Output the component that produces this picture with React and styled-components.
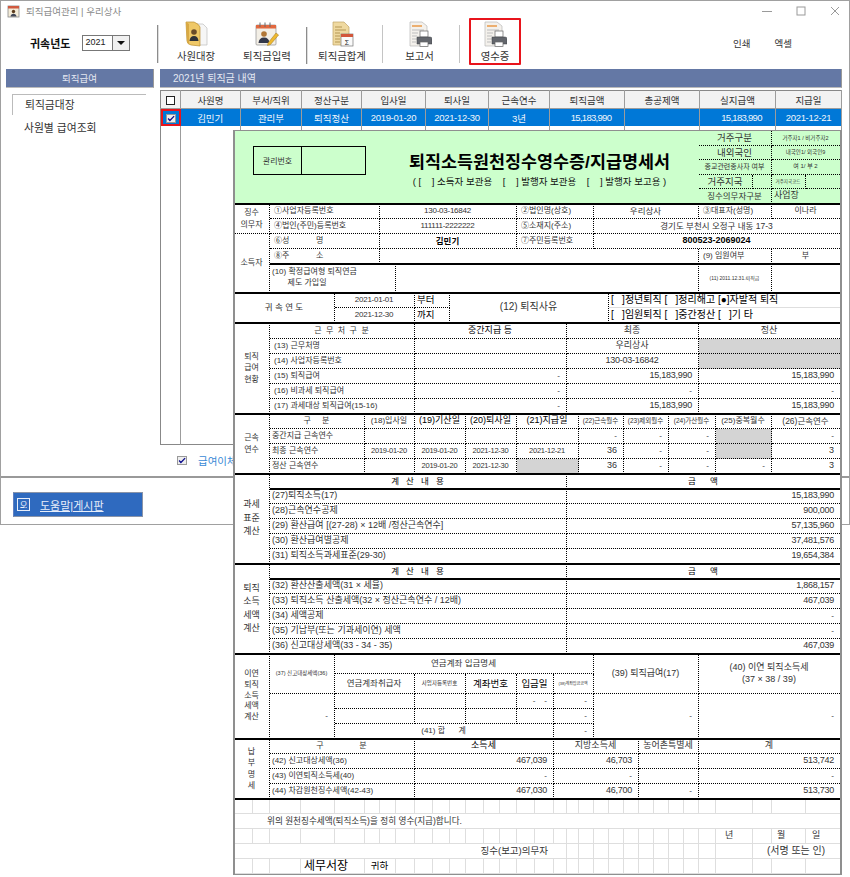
import React from 'react'
import styled, { createGlobalStyle } from 'styled-components'

const FONT = '"Liberation Sans", "Noto Sans CJK KR", sans-serif'

const GlobalStyle = createGlobalStyle`
  html, body {
    margin: 0;
    background: #fff;
    font-family: ${FONT};
    color: #333;
  }
`

const Page = styled.div`
  position: relative;
  width: 850px;
  height: 877px;
  overflow: hidden;
`

const Window = styled.div`
  width: 850px;
  height: 525px;
  box-sizing: border-box;
  border: 1px solid #a0a0a0;
  display: flex;
  flex-direction: column;
`

const TitleBar = styled.div`
  height: 20px;
  display: flex;
  align-items: center;
  padding: 0 4px 0 6px;
  gap: 6px;
  font-size: 9.5px;
  color: #8a8a8a;
`

const TitleText = styled.span`
  flex: 1;
`

const WinButton = styled.span`
  width: 20px;
  margin-left: 8px;
  display: flex;
  justify-content: center;
  align-items: center;
`

const Toolbar = styled.div`
  height: 45px;
  display: flex;
  align-items: stretch;
`

const YearBox = styled.div`
  width: 156px;
  display: flex;
  align-items: center;
  gap: 12px;
  padding-left: 29px;
  box-sizing: border-box;
  margin-top: -2px;
`

const YearLabel = styled.b`
  font-size: 11px;
  color: #111;
`

const YearSelect = styled.div`
  width: 48px;
  height: 16px;
  box-sizing: border-box;
  border: 1px solid #777;
  display: flex;
  font-size: 9px;
  line-height: 13px;
  color: #222;
  padding-left: 2px;
  justify-content: space-between;
`

const SelectArrow = styled.span`
  width: 16px;
  border-left: 1px solid #777;
  background: #f0f0f0;
  display: flex;
  align-items: center;
  justify-content: center;
  &::after {
    content: '';
    border: 4px solid transparent;
    border-top: 4px solid #111;
    border-bottom: 0;
  }
`

const Divider = styled.span`
  width: 1px;
  flex: none;
  margin: ${p => p.$margin || '5px 0 5px'};
  background: ${p => (p.$dark ? '#8c8c8c' : '#c4c4c4')};
  border-right: ${p => (p.$dark ? '1px solid #ddd' : 'none')};
`

const ToolButton = styled.div`
  width: ${p => p.$width}px;
  flex: none;
  display: flex;
  flex-direction: column;
  align-items: center;
  justify-content: flex-end;
  gap: 1px;
  font-size: 10.4px;
  color: #333;
  padding: 0 ${p => p.$trail || 0}px 3px 0;
  box-sizing: border-box;
  ${p => p.$active && `
    border: 2px solid #e8141c;
    margin: -3px 0 1px;
    padding-bottom: 0;
    border-radius: 1px;
  `}
`

const ToolIcon = styled.svg`
  width: 24px;
  height: 26px;
  display: block;
`

const TextAction = styled.span`
  font-size: 9.5px;
  color: #333;
  align-self: center;
  margin-top: -2px;
  margin-left: ${p => p.$left}px;
`

const Body = styled.div`
  height: 412px;
  display: flex;
  padding: 3px 7px 0 5px;
  gap: 6px;
  box-sizing: border-box;
  border-bottom: 2px solid #999;
`

const Sidebar = styled.div`
  width: 148px;
  flex: none;
`

const Main = styled.div`
  flex: 1;
  display: flex;
  flex-direction: column;
`

const SectionBar = styled.div`
  height: 19px;
  background: #6478a5;
  color: #e4e8f2;
  font-size: ${p => (p.$center ? 9.5 : 10)}px;
  line-height: 19px;
  text-align: ${p => (p.$center ? 'center' : 'left')};
  padding-left: ${p => (p.$center ? 0 : 13)}px;
  border-right: 1px solid #999;
  border-bottom: 1px solid #bbb;
  box-sizing: border-box;
`

const SideItem = styled.div`
  margin: ${p => (p.$active ? '6px 0 0 6px' : '2px 0 0 6px')};
  width: 134px;
  height: ${p => (p.$active ? 21 : 24)}px;
  line-height: ${p => (p.$active ? 21 : 23)}px;
  padding-left: 12px;
  box-sizing: border-box;
  font-size: 10.8px;
  color: #333;
  border-top: ${p => (p.$active ? '1px solid #bbb' : 'none')};
  border-left: ${p => (p.$active ? '1px solid #bbb' : 'none')};
`

const ListTable = styled.table`
  margin-top: 2px;
  width: 681px;
  height: 355px;
  table-layout: fixed;
  border-collapse: collapse;
  border: 1px solid #888;
  font-size: 9.5px;
`

const HeadCell = styled.th`
  height: 17px;
  padding: 0;
  background: #f2f2f2;
  font-weight: normal;
  color: #333;
  border-right: 1px solid #9c9c9c;
  border-bottom: 1px solid #9c9c9c;
`

const RowCell = styled.td`
  height: 17px;
  padding: 0 0 0 ${p => p.$shift || 0}px;
  background: #0078d7;
  color: #f2f6fb;
  text-align: center;
  letter-spacing: ${p => p.$spacing || 0}px;
  border-right: 1px solid #9c9c9c;
`

const CheckMark = styled.td`
  padding: 0;
  text-align: center;
  background: #0078d7;
  outline: 2px solid #e8141c;
  outline-offset: -2px;
`

const FillCell = styled.td`
  padding: 0;
  border-right: 1px solid #9c9c9c;
`

const Square = styled.span`
  display: inline-block;
  width: 9px;
  height: 9px;
  box-sizing: border-box;
  border: 1px solid #222;
  background: #fff;
  vertical-align: middle;
`

const CheckBox = styled.span`
  display: inline-flex;
  width: 10px;
  height: 9px;
  background: #eee;
  border: 1px solid #999;
  box-sizing: border-box;
  vertical-align: middle;
  align-items: center;
  justify-content: center;
  overflow: visible;
`

const TransferRow = styled.div`
  display: flex;
  align-items: center;
  gap: 11px;
  padding: 8px 0 0 17px;
  font-size: 10.5px;
  color: #3a8ad6;
`

const Footer = styled.div`
  flex: 1;
  padding: 14px 0 0 12px;
`

const HelpButton = styled.div`
  width: 130px;
  height: 25px;
  box-sizing: border-box;
  background: #2f6abf;
  border: 1px solid #8a94a8;
  border-left-color: #5f7fc0;
  display: flex;
  align-items: center;
  gap: 10px;
  padding-left: 3px;
  color: #e8eefa;
  font-size: 11px;
  text-decoration: underline;
`

const HelpIcon = styled.span`
  width: 11px;
  height: 11px;
  border: 1px solid #e8eefa;
  font-size: 8px;
  line-height: 10px;
  text-align: center;
  text-decoration: none;
  flex: none;
`

/* 원천징수영수증 서식: 엑셀 셀 경계를 그대로 열/행 격자로 쓴다 */
const COLS = [235, 253, 270, 301, 335, 365, 380, 396, 415, 433, 450, 466, 484, 500, 517, 535, 554, 567, 579, 594, 609, 624, 639, 654, 669, 684, 699, 716, 753, 772, 806, 840]
const ROWS = [131, 146, 160, 175, 189, 204, 219, 234, 249, 264, 293, 308, 323, 339, 354, 369, 384, 399, 414, 429, 444, 459, 474, 489, 504, 519, 534, 549, 564, 579, 594, 609, 624, 639, 654, 674, 694, 709, 724, 739, 754, 769, 784, 799, 814, 829, 844, 859, 874]

const track = list => list.slice(1).map((v, i) => `${v - list[i]}px`).join(' ')
const colIndex = x => COLS.indexOf(x) + 1
const rowIndex = y => ROWS.indexOf(y) + 1

const FormSheet = styled.div`
  position: absolute;
  left: 233px;
  top: 130px;
  border: 2px solid #8f8f8f;
  border-top: 1px solid #8f8f8f;
  border-bottom: 1px solid #8f8f8f;
  background: #fff;
  display: grid;
  grid-template-columns: ${track(COLS)};
  grid-template-rows: ${track(ROWS)};
  color: #333;
  font-size: 8px;
`

const GreenBand = styled.div`
  grid-area: 1 / 1 / 6 / -1;
  background: #ccffcc;
`

const Rule = styled.div`
  grid-row: ${p => p.$row};
  grid-column: ${p => p.$col} / -1;
  height: 2px;
  margin-top: -1px;
  background: #000;
  z-index: 2;
`

const Cell = styled.div`
  grid-column: ${p => p.$col};
  grid-row: ${p => p.$row};
  box-sizing: border-box;
  display: flex;
  align-items: center;
  justify-content: ${p => ({ l: 'flex-start', c: 'center', r: 'flex-end' }[p.$align || 'l'])};
  padding: 0 ${p => (p.$align === 'r' ? 6 : 1)}px 0 ${p => (p.$pad ?? (p.$align ? 0 : 4))}px;
  border-right: ${p => (p.$noR ? 'none' : p.$pale ? '1px solid #dedede' : '1px dotted #000')};
  border-bottom: ${p => (p.$pale ? '1px solid #dedede' : '1px dotted #000')};
  background: ${p => (p.$grey ? '#d4d4d4' : 'transparent')};
  font-size: ${p => p.$size || 8}px;
  font-weight: ${p => (p.$bold ? 700 : 400)};
  color: ${p => (p.$bold || p.$dark ? '#000' : '#333')};
  letter-spacing: ${p => (p.$num ? '-0.25px' : '0')};
  text-align: ${p => (p.$align === 'l' || !p.$align ? 'left' : 'center')};
  white-space: pre;
  line-height: ${p => p.$lead || 1.25};
  overflow: hidden;
  z-index: 1;
`

const ManageBox = styled.div`
  grid-column: ${p => p.$col};
  grid-row: 2 / 4;
  border: 1px solid #000;
  margin-right: -1px;
  display: flex;
  align-items: center;
  justify-content: center;
  font-size: 8px;
  color: #333;
  z-index: 1;
`

const DocTitle = styled.div`
  grid-column: ${colIndex(380)} / ${colIndex(699)};
  grid-row: 2 / 4;
  font-size: 17.4px;
  font-weight: 700;
  color: #000;
  display: flex;
  align-items: center;
  justify-content: center;
  white-space: nowrap;
  z-index: 1;
`

const DocSub = styled.div`
  grid-column: ${colIndex(380)} / ${colIndex(699)};
  grid-row: 4 / 5;
  font-size: 9.5px;
  color: #111;
  display: flex;
  align-items: center;
  justify-content: center;
  white-space: pre;
  margin-top: -3px;
  z-index: 1;
`

// [x1, x2, y1, y2, text, options] 좌표는 COLS/ROWS 경계값
const CELLS = [
  // 거주 구분 (녹색 영역 오른쪽)
  [699, 772, 131, 146, '거주구분', { align: 'c', size: 9.5 }],
  [772, 840, 131, 146, '거주자1 / 비거주자2', { align: 'c', size: 5.5, noR: true }],
  [699, 772, 146, 160, '내외국인', { align: 'c', size: 9.5 }],
  [772, 840, 146, 160, '내국인1/ 외국인9', { align: 'c', size: 5.5, noR: true }],
  [699, 772, 160, 175, '종교관련종사자 여부', { align: 'c', size: 7 }],
  [772, 840, 160, 175, '여 1/ 부 2', { align: 'c', size: 6, noR: true }],
  [699, 753, 175, 189, '거주지국', { align: 'c', size: 9.5 }],
  [753, 772, 175, 189, '', {}],
  [772, 806, 175, 189, '거주지국코드', { align: 'c', size: 4.5 }],
  [806, 840, 175, 189, '', { noR: true }],
  [699, 772, 189, 204, '징수의무자구분', { align: 'c', size: 8.5 }],
  [772, 840, 189, 204, '사업장', { size: 9, pad: 2, noR: true }],

  // 징수의무자
  [235, 270, 204, 234, '징수\n의무자', { align: 'c', lead: 1.45 }],
  [270, 380, 204, 219, '①사업자등록번호'],
  [380, 517, 204, 219, '130-03-16842', { align: 'c', num: true }],
  [517, 594, 204, 219, '②법인명(상호)'],
  [594, 699, 204, 219, '우리상사', { align: 'c', size: 8.5 }],
  [699, 772, 204, 219, '③대표자(성명)'],
  [772, 840, 204, 219, '이나라', { align: 'c', noR: true }],
  [270, 380, 219, 234, '④법인(주민)등록번호'],
  [380, 517, 219, 234, '111111-2222222', { align: 'c', num: true }],
  [517, 594, 219, 234, '⑤소재지(주소)'],
  [594, 840, 219, 234, '경기도 부천시 오정구 내동 17-3', { align: 'c', size: 8.5, noR: true }],

  // 소득자
  [235, 270, 234, 293, '소득자', { align: 'c' }],
  [270, 380, 234, 249, '⑥성            명'],
  [380, 517, 234, 249, '김민기', { align: 'c', bold: true, size: 8.5 }],
  [517, 594, 234, 249, '⑦주민등록번호'],
  [594, 840, 234, 249, '800523-2069024', { align: 'c', bold: true, size: 9, noR: true }],
  [270, 380, 249, 264, '⑧주            소'],
  [380, 699, 249, 264, ''],
  [699, 772, 249, 264, '(9) 임원여부'],
  [772, 840, 249, 264, '부', { align: 'c', noR: true }],
  [270, 396, 264, 293, '(10) 확정급여형 퇴직연금\n       제도 가입일', { pad: 2, lead: 1.35 }],
  [396, 699, 264, 293, ''],
  [699, 772, 264, 293, '(11) 2011.12.31.퇴직금', { align: 'c', size: 5 }],
  [772, 840, 264, 293, '', { noR: true }],

  // 귀속연도
  [235, 335, 293, 323, '귀 속 연 도', { align: 'c', size: 8.5 }],
  [335, 415, 293, 308, '2021-01-01', { align: 'c', num: true }],
  [415, 450, 293, 308, '부터', { size: 9.5, pad: 2, dark: true }],
  [335, 415, 308, 323, '2021-12-30', { align: 'c', num: true }],
  [415, 450, 308, 323, '까지', { size: 9.5, pad: 2, dark: true }],
  [450, 609, 293, 323, '(12) 퇴직사유', { align: 'c', size: 10 }],
  [609, 840, 293, 308, '[   ]정년퇴직 [   ]정리해고 [●]자발적 퇴직', { size: 10, pad: 2, noR: true, pale: true, dark: true }],
  [609, 840, 308, 323, '[   ]임원퇴직 [   ]중간정산 [   ]기 타', { size: 10, pad: 2, noR: true, dark: true }],

  // 퇴직급여현황
  [235, 270, 323, 414, '퇴직\n급여\n현황', { align: 'c', lead: 1.45 }],
  [270, 415, 323, 339, '근  무  처  구  분', { align: 'c' }],
  [415, 567, 323, 339, '중간지급 등', { align: 'c', dark: true, size: 9 }],
  [567, 699, 323, 339, '최종', { align: 'c', size: 9 }],
  [699, 840, 323, 339, '정산', { align: 'c', size: 9, noR: true }],
  [270, 415, 339, 354, '(13) 근무처명'],
  [415, 567, 339, 354, ''],
  [567, 699, 339, 354, '우리상사', { align: 'c', size: 9 }],
  [699, 840, 339, 354, '', { grey: true, noR: true }],
  [270, 415, 354, 369, '(14) 사업자등록번호'],
  [415, 567, 354, 369, ''],
  [567, 699, 354, 369, '130-03-16842', { align: 'c', size: 9, num: true }],
  [699, 840, 354, 369, '', { grey: true, noR: true }],
  [270, 415, 369, 384, '(15) 퇴직급여'],
  [415, 567, 369, 384, '-', { align: 'r' }],
  [567, 699, 369, 384, '15,183,990', { align: 'r', size: 9, num: true }],
  [699, 840, 369, 384, '15,183,990', { align: 'r', size: 9, num: true, noR: true }],
  [270, 415, 384, 399, '(16) 비과세 퇴직급여'],
  [415, 567, 384, 399, '-', { align: 'r' }],
  [567, 699, 384, 399, '-', { align: 'r' }],
  [699, 840, 384, 399, '-', { align: 'r', noR: true }],
  [270, 415, 399, 414, '(17) 과세대상 퇴직급여(15-16)'],
  [415, 567, 399, 414, '-', { align: 'r' }],
  [567, 699, 399, 414, '15,183,990', { align: 'r', size: 9, num: true }],
  [699, 840, 399, 414, '15,183,990', { align: 'r', size: 9, num: true, noR: true }],

  // 근속연수
  [235, 270, 414, 474, '근속\n연수', { align: 'c', lead: 1.45 }],
  [270, 365, 414, 429, '구     분', { align: 'c' }],
  [365, 415, 414, 429, '(18)입사일', { align: 'c' }],
  [415, 466, 414, 429, '(19)기산일', { align: 'c', size: 9, dark: true }],
  [466, 517, 414, 429, '(20)퇴사일', { align: 'c', size: 9, dark: true }],
  [517, 579, 414, 429, '(21)지급일', { align: 'c', size: 9, dark: true }],
  [579, 624, 414, 429, '(22)근속월수', { align: 'c', size: 6.5 }],
  [624, 669, 414, 429, '(23)제외월수', { align: 'c', size: 6.5 }],
  [669, 716, 414, 429, '(24)가산월수', { align: 'c', size: 6.5 }],
  [716, 772, 414, 429, '(25)중복월수', { align: 'c', size: 8 }],
  [772, 840, 414, 429, '(26)근속연수', { align: 'c', size: 8.5, noR: true }],
  [270, 365, 429, 444, '중간지급 근속연수', { pad: 2 }],
  [365, 415, 429, 444, ''],
  [415, 466, 429, 444, ''],
  [466, 517, 429, 444, ''],
  [517, 579, 429, 444, ''],
  [579, 624, 429, 444, '-', { align: 'r' }],
  [624, 669, 429, 444, '-', { align: 'r' }],
  [669, 716, 429, 444, '-', { align: 'r' }],
  [716, 772, 429, 444, '', { grey: true }],
  [772, 840, 429, 444, '-', { align: 'r', noR: true }],
  [270, 365, 444, 459, '최종 근속연수', { pad: 2 }],
  [365, 415, 444, 459, '2019-01-20', { align: 'c', num: true, size: 7.5 }],
  [415, 466, 444, 459, '2019-01-20', { align: 'c', num: true, size: 7.5 }],
  [466, 517, 444, 459, '2021-12-30', { align: 'c', num: true, size: 7.5 }],
  [517, 579, 444, 459, '2021-12-21', { align: 'c', num: true, size: 7.5 }],
  [579, 624, 444, 459, '36', { align: 'r', size: 9 }],
  [624, 669, 444, 459, '-', { align: 'r' }],
  [669, 716, 444, 459, '-', { align: 'r' }],
  [716, 772, 444, 459, '', { grey: true }],
  [772, 840, 444, 459, '3', { align: 'r', size: 9, noR: true }],
  [270, 365, 459, 474, '정산 근속연수', { pad: 2 }],
  [365, 415, 459, 474, ''],
  [415, 466, 459, 474, '2019-01-20', { align: 'c', num: true, size: 7.5 }],
  [466, 517, 459, 474, '2021-12-30', { align: 'c', num: true, size: 7.5 }],
  [517, 579, 459, 474, '', { grey: true }],
  [579, 624, 459, 474, '36', { align: 'r', size: 9 }],
  [624, 669, 459, 474, '-', { align: 'r' }],
  [669, 716, 459, 474, '-', { align: 'r' }],
  [716, 772, 459, 474, '-', { align: 'r' }],
  [772, 840, 459, 474, '3', { align: 'r', size: 9, noR: true }],

  // 과세표준계산
  [235, 270, 474, 564, '과세\n표준\n계산', { align: 'c', size: 9, lead: 1.5 }],
  [270, 567, 474, 489, '계   산   내   용', { align: 'c', dark: true, size: 8.5 }],
  [567, 840, 474, 489, '금      액', { align: 'c', dark: true, size: 8.5, noR: true }],
  [270, 567, 489, 504, '(27)퇴직소득(17)', { size: 9, pad: 2 }],
  [567, 840, 489, 504, '15,183,990', { align: 'r', size: 9, num: true, noR: true }],
  [270, 567, 504, 519, '(28)근속연수공제', { size: 9, pad: 2 }],
  [567, 840, 504, 519, '900,000', { align: 'r', size: 9, num: true, noR: true }],
  [270, 567, 519, 534, '(29) 환산급여 [(27-28) × 12배 /정산근속연수]', { size: 9, pad: 2 }],
  [567, 840, 519, 534, '57,135,960', { align: 'r', size: 9, num: true, noR: true }],
  [270, 567, 534, 549, '(30) 환산급여별공제', { size: 9, pad: 2 }],
  [567, 840, 534, 549, '37,481,576', { align: 'r', size: 9, num: true, noR: true }],
  [270, 567, 549, 564, '(31) 퇴직소득과세표준(29-30)', { size: 9, pad: 2 }],
  [567, 840, 549, 564, '19,654,384', { align: 'r', size: 9, num: true, noR: true }],

  // 퇴직소득세액계산
  [235, 270, 564, 654, '퇴직\n소득\n세액\n계산', { align: 'c', size: 9, lead: 1.45 }],
  [270, 567, 564, 579, '계   산   내   용', { align: 'c', dark: true, size: 8.5 }],
  [567, 840, 564, 579, '금      액', { align: 'c', dark: true, size: 8.5, noR: true }],
  [270, 567, 579, 594, '(32) 환산산출세액(31 × 세율)', { size: 9, pad: 2 }],
  [567, 840, 579, 594, '1,868,157', { align: 'r', size: 9, num: true, noR: true }],
  [270, 567, 594, 609, '(33) 퇴직소득 산출세액(32 × 정산근속연수 / 12배)', { size: 9, pad: 2 }],
  [567, 840, 594, 609, '467,039', { align: 'r', size: 9, num: true, noR: true }],
  [270, 567, 609, 624, '(34) 세액공제', { size: 9, pad: 2 }],
  [567, 840, 609, 624, '-', { align: 'r', noR: true }],
  [270, 567, 624, 639, '(35) 기납부(또는 기과세이연) 세액', { size: 9, pad: 2 }],
  [567, 840, 624, 639, '-', { align: 'r', noR: true }],
  [270, 567, 639, 654, '(36) 신고대상세액(33 - 34 - 35)', { size: 9, pad: 2 }],
  [567, 840, 639, 654, '467,039', { align: 'r', size: 9, num: true, noR: true }],

  // 이연퇴직소득세액계산
  [235, 270, 654, 739, '이연\n퇴직\n소득\n세액\n계산', { align: 'c', lead: 1.35 }],
  [270, 335, 654, 694, '(37) 신고대상세액(36)', { align: 'c', size: 5.5 }],
  [335, 594, 654, 674, '연금계좌 입금명세', { align: 'c', size: 8.5 }],
  [594, 699, 654, 694, '(39) 퇴직급여(17)', { align: 'c', size: 9 }],
  [699, 840, 654, 694, '(40) 이연 퇴직소득세\n(37 × 38 / 39)', { align: 'c', size: 9, noR: true, lead: 1.3 }],
  [335, 415, 674, 694, '연금계좌취급자', { align: 'c', size: 8.5 }],
  [415, 466, 674, 694, '사업자등록번호', { align: 'c', size: 5.5 }],
  [466, 517, 674, 694, '계좌번호', { align: 'c', size: 9.5, dark: true }],
  [517, 554, 674, 694, '입금일', { align: 'c', size: 9.5, dark: true }],
  [554, 594, 674, 694, '(38)계좌입금금액', { align: 'c', size: 4 }],
  [270, 335, 694, 739, '-', { align: 'r' }],
  [335, 415, 694, 709, ''],
  [415, 466, 694, 709, ''],
  [466, 517, 694, 709, ''],
  [517, 554, 694, 709, '-    -', { align: 'r', pad: 0 }],
  [554, 594, 694, 709, '-', { align: 'r' }],
  [335, 415, 709, 724, ''],
  [415, 466, 709, 724, ''],
  [466, 517, 709, 724, ''],
  [517, 554, 709, 724, ''],
  [554, 594, 709, 724, '-', { align: 'r' }],
  [335, 554, 724, 739, '(41) 합      계', { align: 'c' }],
  [554, 594, 724, 739, '-', { align: 'r' }],
  [594, 699, 694, 739, '-', { align: 'r' }],
  [699, 840, 694, 739, '-', { align: 'r', noR: true }],

  // 납부명세
  [235, 270, 739, 799, '납\n부\n명\n세', { align: 'c', lead: 1.4 }],
  [270, 415, 739, 754, '구                분', { align: 'c' }],
  [415, 554, 739, 754, '소득세', { align: 'c', size: 9, dark: true }],
  [554, 639, 739, 754, '지방소득세', { align: 'c', size: 9 }],
  [639, 699, 739, 754, '농어촌특별세', { align: 'c', size: 9 }],
  [699, 840, 739, 754, '계', { align: 'c', size: 9, noR: true }],
  [270, 415, 754, 769, '(42) 신고대상세액(36)', { pad: 2 }],
  [415, 554, 754, 769, '467,039', { align: 'r', size: 9, num: true }],
  [554, 639, 754, 769, '46,703', { align: 'r', size: 9, num: true }],
  [639, 699, 754, 769, ''],
  [699, 840, 754, 769, '513,742', { align: 'r', size: 9, num: true, noR: true }],
  [270, 415, 769, 784, '(43) 이연퇴직소득세(40)', { pad: 2 }],
  [415, 554, 769, 784, '-', { align: 'r' }],
  [554, 639, 769, 784, '-', { align: 'r' }],
  [639, 699, 769, 784, ''],
  [699, 840, 769, 784, '-', { align: 'r', noR: true }],
  [270, 415, 784, 799, '(44) 차감원천징수세액(42-43)', { pad: 2 }],
  [415, 554, 784, 799, '467,030', { align: 'r', size: 9, num: true }],
  [554, 639, 784, 799, '46,700', { align: 'r', size: 9, num: true }],
  [639, 699, 784, 799, '-', { align: 'r' }],
  [699, 840, 784, 799, '513,730', { align: 'r', size: 9, num: true, noR: true }],

  // 하단 서명 영역
  [235, 840, 814, 829, '위의 원천징수세액(퇴직소득)을 정히 영수(지급)합니다.', { pale: true, noR: true, pad: 32, size: 8.6 }],
  [235, 554, 844, 859, '징수(보고)의무자', { align: 'r', pale: true, size: 9.5, noR: true }],
  [753, 840, 844, 859, '(서명 또는 인)', { align: 'c', pale: true, size: 10, noR: true }],
  [716, 753, 829, 844, '년', { align: 'l', pale: true, size: 9, pad: 9 }],
  [772, 806, 829, 844, '월', { align: 'l', pale: true, size: 9, pad: 5 }],
  [806, 840, 829, 844, '일', { align: 'l', pale: true, size: 9, pad: 6, noR: true }],
  [301, 365, 859, 874, '세무서장', { pale: true, size: 12, pad: 3, dark: true }],
  [365, 396, 859, 874, '귀하', { align: 'c', pale: true, size: 9.5, dark: true }],
]

// 선이 없는 구간을 뺀, 연한 눈금만 있는 빈 칸
const paleGaps = (y1, y2, skip) => COLS.slice(0, -1)
  .map((x, i) => [x, COLS[i + 1], y1, y2, '', { pale: true, noR: i === COLS.length - 2 }])
  .filter(([a, b]) => !skip.some(([s, e]) => a >= s && b <= e))

const PALE_CELLS = [
  ...paleGaps(799, 814, []),
  ...paleGaps(829, 844, [[716, 753], [772, 840]]),
  ...paleGaps(844, 859, [[235, 554], [753, 840]]),
  ...paleGaps(859, 874, [[301, 396]]),
]

const RULES = [
  [204, 235], [264, 270], [293, 235], [323, 235], [414, 235], [474, 235], [489, 270],
  [564, 235], [579, 270], [654, 235], [739, 235], [799, 235],
]

const LIST_COLS = [20, 60, 61, 60, 64, 63, 61, 75, 75, 76, 66]
const LIST_HEAD = ['사원명', '부서/직위', '정산구분', '입사일', '퇴사일', '근속연수', '퇴직금액', '총공제액', '실지급액', '지급일']

const renderCell = ([x1, x2, y1, y2, text, o = {}]) => (
  <Cell
    key={`${x1}-${y1}`}
    $col={`${colIndex(x1)} / ${colIndex(x2)}`}
    $row={`${rowIndex(y1)} / ${rowIndex(y2)}`}
    $align={o.align}
    $size={o.size}
    $bold={o.bold}
    $dark={o.dark}
    $num={o.num}
    $grey={o.grey}
    $pale={o.pale}
    $noR={o.noR}
    $pad={o.pad}
    $lead={o.lead}
  >
    {text}
  </Cell>
)

const CheckTick = () => (
  <svg width="11" height="9" viewBox="0 0 11 9">
    <path d="M1.5 4.5 L4 7.2 L9.8 1.2" fill="none" stroke="#0a0a8c" strokeWidth="1.8" />
  </svg>
)

const FolderIcon = () => (
  <ToolIcon viewBox="0 0 24 26">
    <path d="M11 3 L19 3 L23 7 V24 H14 Z" fill="#f6f6f6" stroke="#bdbdbd" strokeWidth="0.7" />
    <path d="M2 1 H10 Q15 3 16 6 V25 L7 24 Q3 23 3 20 Z" fill="#efc867" stroke="#b98e32" strokeWidth="0.7" />
    <path d="M2 1 L3 20 Q3 22 5 23 L5 3 Z" fill="#d9a944" />
    <circle cx="10" cy="11" r="2.8" fill="#6a4c28" />
    <path d="M5.5 20 Q6 15 10 15 Q14 15 14.5 20 Z" fill="#2f3238" />
  </ToolIcon>
)

const CalendarPersonIcon = () => (
  <ToolIcon viewBox="0 0 24 26">
    <rect x="1" y="4" width="20" height="20" rx="1" fill="#f3efe6" stroke="#8f8f8f" strokeWidth="0.7" />
    <rect x="1" y="4" width="20" height="3.5" fill="#e2683f" />
    <path d="M5 1.5 V6 M10 1.5 V6 M15 1.5 V6" stroke="#6a6a6a" strokeWidth="1" />
    <circle cx="9" cy="13" r="2.8" fill="#b07636" />
    <path d="M3.5 22 Q4 16.5 9 16.5 Q14 16.5 14.5 22 Z" fill="#33384a" />
    <path d="M13 22 L21 12 L23.6 14 L15.5 23.5 L12.5 24.5 Z" fill="#efb92f" stroke="#9a7520" strokeWidth="0.5" />
  </ToolIcon>
)

const LedgerIcon = () => (
  <ToolIcon viewBox="0 0 24 26">
    <path d="M3 1 H14 L19 6 V24 H3 Z" fill="#efd9a0" stroke="#c0a365" strokeWidth="0.7" />
    <path d="M5 6 H12 M5 9 H16 M5 12 H10 M5 15 H10 M5 18 H10 M5 21 H10" stroke="#b49754" strokeWidth="1" />
    <rect x="11" y="13" width="12" height="12" fill="#fafafa" stroke="#777" strokeWidth="0.7" />
    <rect x="11" y="13" width="12" height="3" fill="#d2563a" />
    <text x="17" y="24" fontSize="7" textAnchor="middle" fill="#222" fontFamily="Liberation Sans">Σ</text>
  </ToolIcon>
)

const PrinterDocIcon = () => (
  <ToolIcon viewBox="0 0 24 26">
    <path d="M2 1 H14 L19 5 V25 H2 Z" fill="#f4f1ec" stroke="#b8b8b8" strokeWidth="0.7" />
    <path d="M4 5 H14" stroke="#e8923c" strokeWidth="1.4" />
    <path d="M4 9 H16 M4 12 H10 M4 15 H9 M4 18 H9 M4 21 H8" stroke="#bdbdbd" strokeWidth="1" />
    <rect x="12" y="10" width="8" height="6" fill="#fff" stroke="#666" strokeWidth="0.7" />
    <path d="M9 16 H22 Q24 16 24 18 V23 H9 Z" fill="#63666c" stroke="#3f4146" strokeWidth="0.5" />
    <rect x="12" y="21" width="8" height="4.5" fill="#fff" stroke="#666" strokeWidth="0.7" />
  </ToolIcon>
)

const AppIcon = () => (
  <svg width="13" height="14" viewBox="0 0 13 14">
    <rect x="1" y="2" width="11" height="11" fill="#f4ecd8" stroke="#888" strokeWidth="0.8" />
    <rect x="1" y="2" width="11" height="2.5" fill="#cf5a40" />
    <circle cx="6.5" cy="7.5" r="1.7" fill="#5c3c1e" />
    <path d="M3.5 12.5 Q4 9.7 6.5 9.7 Q9 9.7 9.5 12.5 Z" fill="#3f4658" />
  </svg>
)

const Minimize = () => (
  <svg width="10" height="10" viewBox="0 0 10 10"><path d="M0 5.5 H10" stroke="#9a9a9a" /></svg>
)
const Maximize = () => (
  <svg width="10" height="10" viewBox="0 0 10 10"><rect x="1" y="1" width="8" height="8" fill="none" stroke="#9a9a9a" /></svg>
)
const CloseIcon = () => (
  <svg width="10" height="10" viewBox="0 0 10 10"><path d="M1 1 L9 9 M9 1 L1 9" stroke="#9a9a9a" /></svg>
)

export default function App() {
  return (
    <Page>
      <GlobalStyle />
      <Window>
        <TitleBar>
          <AppIcon />
          <TitleText>퇴직급여관리 | 우리상사</TitleText>
          <WinButton><Minimize /></WinButton>
          <WinButton><Maximize /></WinButton>
          <WinButton><CloseIcon /></WinButton>
        </TitleBar>
        <Toolbar>
          <YearBox>
            <YearLabel>귀속년도</YearLabel>
            <YearSelect>2021<SelectArrow /></YearSelect>
          </YearBox>
          <Divider $dark $margin="4px 0 3px" />
          <ToolButton $width={74}><FolderIcon />사원대장</ToolButton>
          <ToolButton $width={73} $trail={5}><CalendarPersonIcon />퇴직금입력</ToolButton>
          <Divider $dark $margin="6px 0 2px" />
          <ToolButton $width={74} $trail={6}><LedgerIcon />퇴직금합계</ToolButton>
          <Divider $margin="4px 0 3px" />
          <ToolButton $width={76} $trail={3}><PrinterDocIcon />보고서</ToolButton>
          <Divider $margin="4px 0 3px" />
          <ToolButton $width={9} />
          <ToolButton $width={52} $active><PrinterDocIcon />영수증</ToolButton>
          <TextAction $left={212}>인쇄</TextAction>
          <TextAction $left={24}>엑셀</TextAction>
        </Toolbar>
        <Body>
          <Sidebar>
            <SectionBar $center>퇴직급여</SectionBar>
            <SideItem $active>퇴직금대장</SideItem>
            <SideItem>사원별 급여조회</SideItem>
          </Sidebar>
          <Main>
            <SectionBar>2021년 퇴직금 내역</SectionBar>
            <ListTable>
              <colgroup>
                {LIST_COLS.map((w, i) => <col key={i} width={w} />)}
              </colgroup>
              <thead>
                <tr>
                  <HeadCell><Square /></HeadCell>
                  {LIST_HEAD.map(h => <HeadCell key={h}>{h}</HeadCell>)}
                </tr>
              </thead>
              <tbody>
                <tr>
                  <CheckMark><CheckBox><CheckTick /></CheckBox></CheckMark>
                  <RowCell>김민기</RowCell>
                  <RowCell>관리부</RowCell>
                  <RowCell>퇴직정산</RowCell>
                  <RowCell $spacing={-0.3}>2019-01-20</RowCell>
                  <RowCell $spacing={-0.3}>2021-12-30</RowCell>
                  <RowCell>3년</RowCell>
                  <RowCell $spacing={-0.7} $shift={8}>15,183,990</RowCell>
                  <RowCell />
                  <RowCell $spacing={-0.7} $shift={8}>15,183,990</RowCell>
                  <RowCell $spacing={-0.3}>2021-12-21</RowCell>
                </tr>
                <tr>
                  {LIST_COLS.map((w, i) => <FillCell key={i} />)}
                </tr>
              </tbody>
            </ListTable>
            <TransferRow>
              <CheckBox><CheckTick /></CheckBox>
              급여이체
            </TransferRow>
          </Main>
        </Body>
        <Footer>
          <HelpButton>
            <HelpIcon>Q</HelpIcon>
            도움말|게시판
          </HelpButton>
        </Footer>
      </Window>

      <FormSheet>
        <GreenBand />
        <ManageBox $col={`${colIndex(253)} / ${colIndex(301)}`}>관리번호</ManageBox>
        <ManageBox $col={`${colIndex(301)} / ${colIndex(365)}`} />
        <DocTitle>퇴직소득원천징수영수증/지급명세서</DocTitle>
        <DocSub>{'( [    ] 소득자 보관용    [    ] 발행자 보관용    [    ] 발행자 보고용 )'}</DocSub>
        {CELLS.map(renderCell)}
        {PALE_CELLS.map(renderCell)}
        {RULES.map(([y, x]) => <Rule key={`${y}`} $row={rowIndex(y)} $col={colIndex(x)} />)}
      </FormSheet>
    </Page>
  )
}
